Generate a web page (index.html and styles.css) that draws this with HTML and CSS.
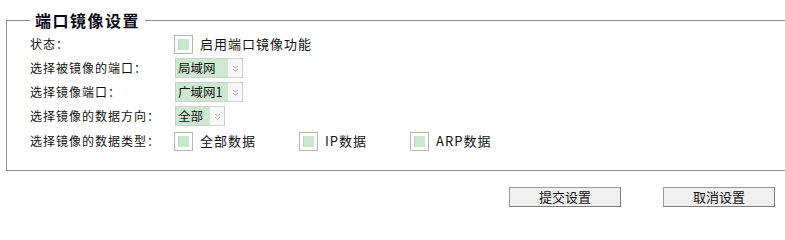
FILE: index.html
```html
<!DOCTYPE html>
<html lang="zh-CN">
<head>
<meta charset="utf-8">
<title>端口镜像设置</title>
<link rel="stylesheet" href="styles.css">
</head>
<body>
<fieldset class="panel">
  <legend class="panel-title">端口镜像设置</legend>
  <div class="row">
    <span class="label">状态：</span>
    <span class="check"><span class="check-inner"></span></span>
    <span class="check-text">启用端口镜像功能</span>
  </div>
  <div class="row">
    <span class="label">选择被镜像的端口：</span>
    <span class="select select-wide"><span class="select-value">局域网</span><span class="select-arrow"><svg width="7" height="7" viewBox="0 0 7 7"><path d="M1 1 L3.5 3 L6 1 M1 4 L3.5 6 L6 4" fill="none" stroke="#b4b4b4" stroke-width="1"/></svg></span></span>
  </div>
  <div class="row">
    <span class="label">选择镜像端口：</span>
    <span class="select select-wide"><span class="select-value">广域网1</span><span class="select-arrow"><svg width="7" height="7" viewBox="0 0 7 7"><path d="M1 1 L3.5 3 L6 1 M1 4 L3.5 6 L6 4" fill="none" stroke="#b4b4b4" stroke-width="1"/></svg></span></span>
  </div>
  <div class="row row-gap-lg">
    <span class="label">选择镜像的数据方向：</span>
    <span class="select select-narrow"><span class="select-value">全部</span><span class="select-arrow"><svg width="7" height="7" viewBox="0 0 7 7"><path d="M1 1 L3.5 3 L6 1 M1 4 L3.5 6 L6 4" fill="none" stroke="#b4b4b4" stroke-width="1"/></svg></span></span>
  </div>
  <div class="row row-last">
    <span class="label">选择镜像的数据类型：</span>
    <span class="opt opt-1"><span class="check"><span class="check-inner"></span></span><span class="check-text">全部数据</span></span>
    <span class="opt opt-2"><span class="check"><span class="check-inner"></span></span><span class="check-text">IP数据</span></span>
    <span class="opt"><span class="check"><span class="check-inner"></span></span><span class="check-text">ARP数据</span></span>
  </div>
</fieldset>
<div class="actions">
  <button class="btn" type="button">提交设置</button>
  <button class="btn" type="button">取消设置</button>
</div>
</body>
</html>
```

FILE: styles.css
```css
html, body {
  margin: 0;
  padding: 0;
  background: #ffffff;
}
body {
  width: 785px;
  height: 216px;
  overflow: hidden;
  font-family: "Noto Sans CJK SC", "Liberation Sans", sans-serif;
  color: #111;
}
.panel {
  margin: 10px -30px 0 6px;
  padding: 4px 0 19px 23px;
  border: 1px solid #8a8a8a;
  border-radius: 0;
  min-width: 0;
}
.panel-title {
  padding: 0 5px;
  font-size: 16px;
  line-height: 20px;
  height: 20px;
  font-weight: bold;
  letter-spacing: 1.5px;
  color: #0a0a1a;
}
.row {
  display: flex;
  align-items: center;
  height: 20px;
  margin-bottom: 4px;
}
.row-gap-lg {
  margin-top: 2px;
  margin-bottom: 5px;
}
.row-last {
  margin-bottom: 0;
}
.label {
  width: 144px;
  flex: none;
  font-size: 12px;
  letter-spacing: 1px;
  line-height: 20px;
  white-space: nowrap;
}
.check {
  flex: none;
  width: 17px;
  height: 17px;
  border: 1px solid #b7b7b0;
  background: #fff;
  display: flex;
  align-items: center;
  justify-content: center;
}
.check-inner {
  width: 10px;
  height: 11px;
  background: #c9e8cf;
  border-left: 1px solid #b5d6bb;
}
.check-text {
  margin-left: 7px;
  font-size: 13px;
  letter-spacing: 1px;
  line-height: 20px;
  white-space: nowrap;
}
.opt {
  display: flex;
  align-items: center;
}
.opt-1 { width: 125px; }
.opt-2 { width: 111px; }
.select {
  display: flex;
  height: 18px;
  border: 1px solid #d0d0d0;
  background: #f7f7f7;
  margin-left: 1px;
}
.select-wide { width: 66px; }
.select-narrow { width: 48px; }
.select-value {
  flex: 1;
  background: #cde9d0;
  font-size: 12.5px;
  line-height: 18px;
  padding-left: 2px;
  white-space: nowrap;
  overflow: hidden;
}
.select-arrow {
  flex: none;
  width: 14px;
  display: flex;
  align-items: center;
  justify-content: center;
}
.select-arrow svg { display: block; }
.actions {
  display: flex;
  margin: 16px 0 0 509px;
  gap: 42px;
}
.btn {
  width: 112px;
  height: 20px;
  padding: 0;
  border: 1px solid #9a9a9a;
  border-right-color: #7c7c7c;
  border-bottom-color: #7c7c7c;
  background: #f0f0f0;
  font-family: "Noto Sans CJK SC", "Liberation Sans", sans-serif;
  font-size: 13px;
  line-height: 18px;
  color: #111;
  border-radius: 0;
}
```
